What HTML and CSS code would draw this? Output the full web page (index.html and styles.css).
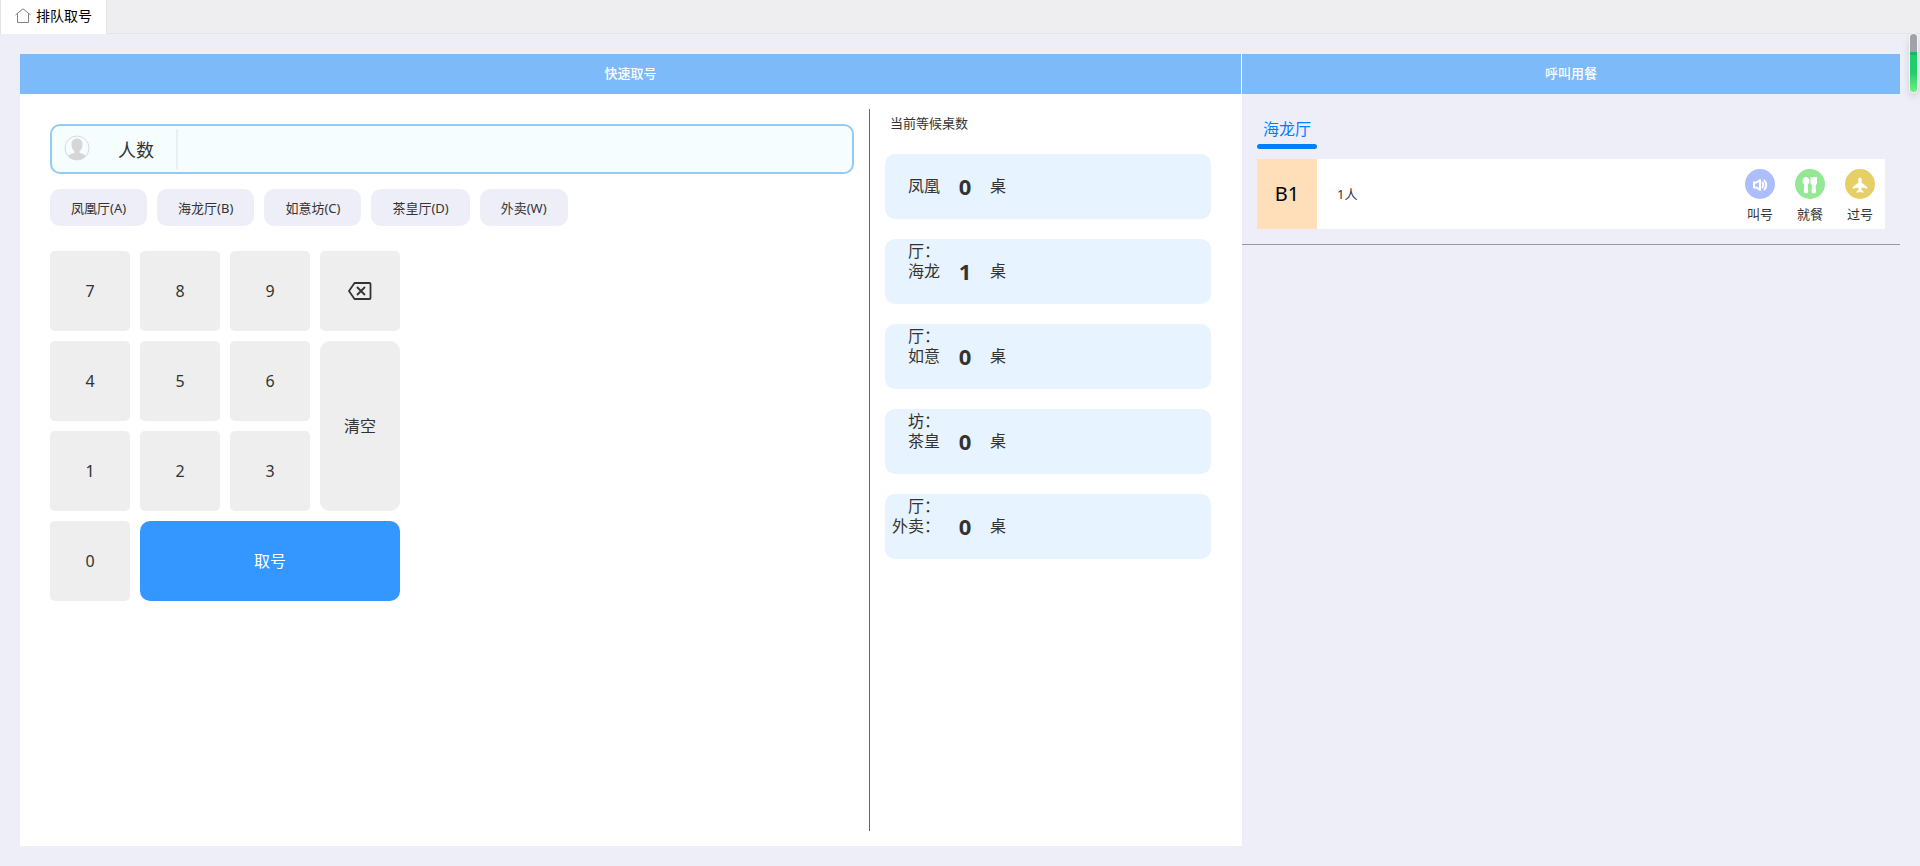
FILE: index.html
```
<!DOCTYPE html>
<html lang="zh-CN">
<head>
<meta charset="utf-8">
<title>排队取号</title>
<link rel="stylesheet" href="styles.css">
</head>
<body>
<nav class="tabbar">
  <a class="tab" href="#">
    <svg class="tab-icon" viewBox="0 0 16 16" fill="none" stroke="#8a8080" stroke-width="1"><path d="M.5 7 8 .8 15.500 7M2.500 5.500V14.500H13.500V5.500"/></svg>
    <span>排队取号</span>
  </a>
</nav>
<main class="page">
  <section class="take">
    <h2 class="panel-title take-title">快速取号</h2>
    <div class="take-body">
      <div class="entry">
        <div class="people">
          <svg class="people-icon" viewBox="0 0 26 26"><circle cx="13" cy="13" r="12" fill="none" stroke="#d9dada" stroke-width="1"/><path fill="#d6d6d6" d="M13 3.500c3.500 0 5.500 2.500 5.500 6 0 3-1.300 5.500-3 6.800v1.400c2.500.8 5 1.700 6.500 3.300A12 12 0 0 1 4 21c1.500-1.600 4-2.500 6.500-3.300v-1.400c-1.700-1.300-3-3.800-3-6.800 0-3.500 2-6 5.500-6z"/></svg>
          <label class="people-label" for="people">人数</label>
          <input class="people-input" id="people" type="text">
        </div>
        <div class="halls">
          <button class="hall" type="button">凤凰厅(A)</button>
          <button class="hall" type="button">海龙厅(B)</button>
          <button class="hall" type="button">如意坊(C)</button>
          <button class="hall" type="button">茶皇厅(D)</button>
          <button class="hall" type="button">外卖(W)</button>
        </div>
        <div class="keypad">
          <button class="key" type="button">7</button>
          <button class="key" type="button">8</button>
          <button class="key" type="button">9</button>
          <button class="key" type="button" aria-label="退格">
            <svg class="back-icon" viewBox="0 0 24 18" fill="none" stroke="#333" stroke-width="1.800" stroke-linejoin="round"><path d="M6.500 1H21.500Q22.500 1 22.500 2V16Q22.500 17 21.500 17H6.500L1 9z"/><path d="M9 5l8 8M17 5l-8 8"/></svg>
          </button>
          <button class="key" type="button">4</button>
          <button class="key" type="button">5</button>
          <button class="key" type="button">6</button>
          <button class="key key-clear" type="button">清空</button>
          <button class="key" type="button">1</button>
          <button class="key" type="button">2</button>
          <button class="key" type="button">3</button>
          <button class="key" type="button">0</button>
          <button class="key key-take" type="button">取号</button>
        </div>
      </div>
      <div class="waiting">
        <h3 class="waiting-title">当前等候桌数</h3>
        <ul class="waiting-list">
          <li class="wait"><span class="wait-name">凤凰厅：</span><strong class="wait-count">0</strong><span>桌</span></li>
          <li class="wait"><span class="wait-name">海龙厅：</span><strong class="wait-count">1</strong><span>桌</span></li>
          <li class="wait"><span class="wait-name">如意坊：</span><strong class="wait-count">0</strong><span>桌</span></li>
          <li class="wait"><span class="wait-name">茶皇厅：</span><strong class="wait-count">0</strong><span>桌</span></li>
          <li class="wait"><span class="wait-name">外卖：</span><strong class="wait-count">0</strong><span>桌</span></li>
        </ul>
      </div>
    </div>
  </section>
  <section class="call">
    <h2 class="panel-title">呼叫用餐</h2>
    <div class="call-body">
      <a class="call-tab" href="#">海龙厅</a>
      <div class="ticket">
        <div class="ticket-no">B1</div>
        <div class="ticket-people">1人</div>
        <div class="actions">
          <button class="action" type="button">
            <svg class="action-icon" viewBox="0 0 30 30"><circle cx="15" cy="15" r="15" fill="#adbeff"/><g fill="none" stroke="#fff" stroke-width="2" stroke-linejoin="round" stroke-linecap="round"><path d="M9 13.500v5M9 13.500h2.500l3.500-2.500v10L11.500 18.500H9M17.500 13.500q1.700 2.500 0 5M19.500 11.500q3.500 4.500 0 9"/></g></svg>
            <span>叫号</span>
          </button>
          <button class="action" type="button">
            <svg class="action-icon" viewBox="0 0 30 30"><circle cx="15" cy="15" r="15" fill="#94e794"/><path fill="#fff" d="M11 8c2.200 0 3.500 1.800 3.500 4 0 1.800-1 3-1.700 3.600l.4 7.200q0 1.700-2.200 1.700t-2.200-1.700l.4-7.200C8.500 15 7.500 13.800 7.500 12c0-2.200 1.300-4 3.500-4zM15.500 8H22v6q0 1.500-1.300 2l.3 6.800q0 1.700-2.200 1.700t-2.200-1.700l.3-6.800q-1.400-.5-1.400-2z"/></svg>
            <span>就餐</span>
          </button>
          <button class="action" type="button">
            <svg class="action-icon" viewBox="0 0 30 30"><circle cx="15" cy="15" r="15" fill="#e6cf67"/><path fill="#fff" d="M15 8.500c1 0 1.700 1 1.700 2.300v3l5.300 4q.5.500.3 2l-5.600-1.300-.2 2.500 2 1.500v1.300L15 23l-3.500.8v-1.300l2-1.500-.2-2.500-5.600 1.300q-.2-1.500.3-2l5.300-4v-3C13.300 9.500 14 8.500 15 8.500z"/></svg>
            <span>过号</span>
          </button>
        </div>
      </div>
    </div>
  </section>
</main>
<div class="scroll-thumb"></div>
</body>
</html>
```
FILE: styles.css
```
* { box-sizing: border-box; }
body {
  margin: 0;
  min-height: 100vh;
  display: flex;
  flex-direction: column;
  background: #eeeef8;
  color: #333;
  font: 13px/20px "Noto Sans", "Noto Sans CJK SC", sans-serif;
}
button {
  border: 0;
  padding: 0;
  color: inherit;
  font: inherit;
  cursor: pointer;
}
a { color: inherit; text-decoration: none; }
h2, h3, ul { margin: 0; padding: 0; font: inherit; list-style: none; }

.tabbar {
  display: flex;
  height: 34px;
  background: #eeeef0;
  border-bottom: 1px solid #e4e4e6;
}
.tab {
  display: flex;
  align-items: center;
  gap: 5px;
  height: 34px;
  padding: 0 14px 2px;
  background: #fff;
  border: solid #e4e4e6;
  border-width: 0 1px;
  color: #000;
  font-size: 14px;
}
.tab-icon { width: 16px; height: 16px; }

.page { flex: 1; display: flex; padding: 20px; }
.panel-title {
  padding-bottom: 2px;
  background: #7cbafa;
  color: #fff;
  font-size: 13px;
  font-weight: 500;
  line-height: 38px;
  text-align: center;
}
.take {
  flex: 65;
  min-width: 0;
  display: flex;
  flex-direction: column;
  background: #fff;
}
.take-title { border-right: 1px solid #fff; }
.take-body { flex: 1; display: flex; padding: 15px; }
.entry { flex: 1; padding: 15px; }
.people {
  display: flex;
  align-items: center;
  height: 50px;
  border: 2px solid #94caf4;
  border-radius: 10px;
  background: #f5fdff;
}
.people-icon { width: 26px; height: 26px; margin: 0 0 2px 12px; }
.people-label {
  width: 86px;
  padding: 2px 0 0 28px;
  font-size: 18px;
}
.people-input {
  flex: 1;
  height: 40px;
  border: 0;
  border-left: 2px solid #ebeff0;
  padding: 0 10px;
  background: none;
  outline: 0;
  font: inherit;
  font-size: 18px;
}
.halls { display: flex; gap: 10px; margin: 15px 0 25px; }
.hall {
  height: 37px;
  padding: 0 21px;
  border-radius: 10px;
  background: #eeeef8;
}
.keypad {
  display: grid;
  grid-template-columns: repeat(4, 80px);
  grid-auto-rows: 80px;
  gap: 10px;
}
.key {
  display: flex;
  align-items: center;
  justify-content: center;
  border-radius: 5px;
  background: #eee;
  font-size: 16px;
}
.key-clear { grid-row: span 2; border-radius: 10px; }
.key-take {
  grid-column: span 3;
  border-radius: 10px;
  background: #3397ff;
  color: #fff;
}
.back-icon { width: 24px; height: 18px; }

.waiting {
  flex: 0 0 358px;
  padding: 4px 16px 0 15px;
  border-left: 1px solid #666;
}
.waiting-title { padding: 0 5px; }
.waiting-list { display: grid; gap: 20px; margin-top: 21px; }
.wait {
  display: flex;
  height: 65px;
  border-radius: 10px;
  background: #e7f3ff;
  font-size: 16px;
  line-height: 65px;
}
/* Long hall names wrap and stay visible above the next card. */
.wait-name { position: relative; z-index: 1; width: 55px; text-align: right; }
.wait-count { width: 50px; font-size: 22px; text-align: center; }

.call { flex: 35; min-width: 0; }
.call-body { padding: 25px 15px 15px; border-bottom: 1px solid #999; }
.call-tab {
  display: block;
  width: 60px;
  color: #0080ff;
  font-size: 16px;
  text-align: center;
}
.call-tab::after {
  content: "";
  display: block;
  height: 5px;
  margin-top: 5px;
  border-radius: 3px;
  background: #0080ff;
}
.ticket {
  display: flex;
  align-items: center;
  height: 70px;
  margin-top: 10px;
  padding-right: 10px;
  background: #fff;
}
.ticket-no {
  width: 60px;
  background: #ffdfba;
  color: #000;
  font-size: 20px;
  line-height: 70px;
  text-align: center;
}
.ticket-people { flex: 1; padding-left: 20px; }
.actions { display: flex; align-self: flex-start; gap: 20px; padding-top: 10px; }
.action {
  display: flex;
  flex-direction: column;
  align-items: center;
  gap: 5px;
  width: 30px;
  background: none;
}
.action span { white-space: nowrap; }
.action-icon { width: 30px; height: 30px; }

.scroll-thumb {
  position: absolute;
  top: 34px;
  right: 3px;
  width: 7px;
  height: 58px;
  border-radius: 4px;
  background: linear-gradient(#a2a1a8 0 18px, #16b860 18px 21px, #20cc6c 21px 38px, #70f080 58px);
  box-shadow: 0 0 0 1px #f4f4fa, 0 4px 8px rgba(0, 0, 0, .16);
}
```
